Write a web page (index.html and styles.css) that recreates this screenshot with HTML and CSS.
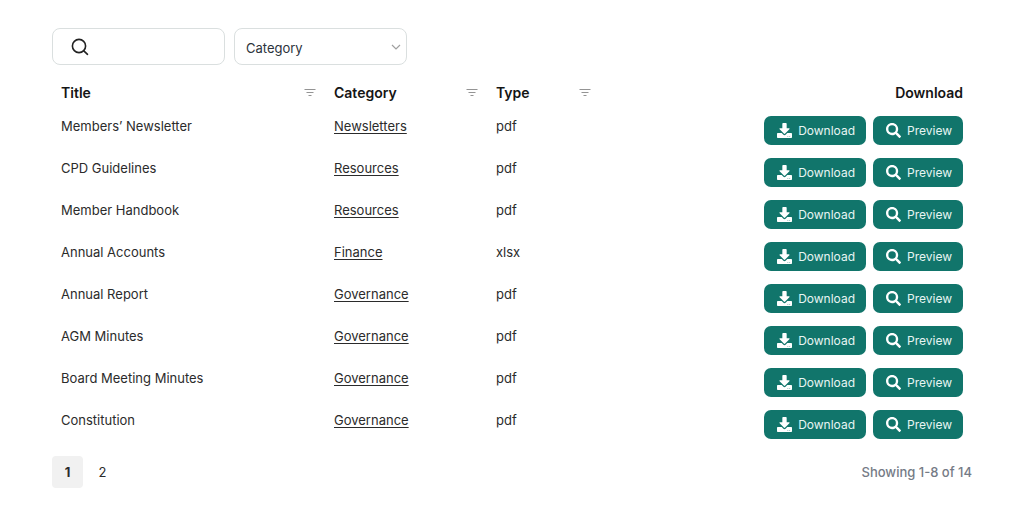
FILE: index.html
```
<!DOCTYPE html>
<html lang="en">
<head>
<meta charset="utf-8">
<meta name="viewport" content="width=device-width, initial-scale=1">
<title>Documents</title>
<link rel="stylesheet" href="styles.css">
</head>
<body>
<svg class="sprite" aria-hidden="true">
  <symbol id="filter" viewBox="0 0 12 10"><path d="M.5 1.5h11M2.5 4.5h7M4.5 7.5h3" fill="none" stroke="currentColor" stroke-width="1.2"/></symbol>
  <symbol id="download" viewBox="0 0 512 512"><path fill="currentColor" d="M206 0h100c13 0 24 11 24 24v158h78c18 0 27 21 14 34L270 368c-7 7-20 7-27 0L91 216c-13-13-4-34 14-34h77V24c0-13 11-24 24-24zm306 366v122c0 13-11 24-24 24H24c-13 0-24-11-24-24V366c0-13 11-24 24-24h137l59 59c20 20 52 20 72 0l59-59h137c13 0 24 11 24 24zM388 464a16 16 0 1 0-32 0 16 16 0 0 0 32 0zm64 0a16 16 0 1 0-32 0 16 16 0 0 0 32 0z"/></symbol>
  <symbol id="lens" viewBox="0 0 512 512"><path fill="currentColor" d="M505 443L405 343c-4-5-11-7-17-7h-16c28-35 44-80 44-128C416 93 323 0 208 0S0 93 0 208s93 208 208 208c48 0 93-16 128-44v16c0 6 2 13 7 17l100 100c9 9 24 9 34 0l28-28c9-10 9-25 0-34zM208 336a128 128 0 1 1 0-256 128 128 0 0 1 0 256z"/></symbol>
</svg>
<main class="documents">
  <form class="filters">
    <label class="search">
      <svg class="search-icon" viewBox="0 0 18 18" aria-hidden="true"><circle cx="8" cy="8" r="6.6"/><path d="M12.8 12.8l3.7 3.5"/></svg>
      <input class="search-input" type="search" aria-label="Search documents">
    </label>
    <div class="select">
      <select class="select-input" aria-label="Category"><option>Category</option></select>
      <svg class="chevron" viewBox="0 0 10 6" aria-hidden="true"><path d="M1 1l4 4 4-4"/></svg>
    </div>
  </form>
  <table class="table">
    <colgroup><col class="col-title"><col class="col-category"><col class="col-type"><col></colgroup>
    <thead>
      <tr>
        <th scope="col"><div class="heading">Title<button class="sort" type="button" aria-label="Filter title"><svg class="sort-icon"><use href="#filter"/></svg></button></div></th>
        <th scope="col"><div class="heading">Category<button class="sort" type="button" aria-label="Filter category"><svg class="sort-icon"><use href="#filter"/></svg></button></div></th>
        <th scope="col"><div class="heading">Type<button class="sort" type="button" aria-label="Filter type"><svg class="sort-icon"><use href="#filter"/></svg></button></div></th>
        <th scope="col" class="end">Download</th>
      </tr>
    </thead>
    <tbody>
      <tr><td>Members’ Newsletter</td><td><a class="link" href="#">Newsletters</a></td><td>pdf</td><td><div class="actions"><button class="button" type="button"><svg class="icon"><use href="#download"/></svg>Download</button><button class="button" type="button"><svg class="icon"><use href="#lens"/></svg>Preview</button></div></td></tr>
      <tr><td>CPD Guidelines</td><td><a class="link" href="#">Resources</a></td><td>pdf</td><td><div class="actions"><button class="button" type="button"><svg class="icon"><use href="#download"/></svg>Download</button><button class="button" type="button"><svg class="icon"><use href="#lens"/></svg>Preview</button></div></td></tr>
      <tr><td>Member Handbook</td><td><a class="link" href="#">Resources</a></td><td>pdf</td><td><div class="actions"><button class="button" type="button"><svg class="icon"><use href="#download"/></svg>Download</button><button class="button" type="button"><svg class="icon"><use href="#lens"/></svg>Preview</button></div></td></tr>
      <tr><td>Annual Accounts</td><td><a class="link" href="#">Finance</a></td><td>xlsx</td><td><div class="actions"><button class="button" type="button"><svg class="icon"><use href="#download"/></svg>Download</button><button class="button" type="button"><svg class="icon"><use href="#lens"/></svg>Preview</button></div></td></tr>
      <tr><td>Annual Report</td><td><a class="link" href="#">Governance</a></td><td>pdf</td><td><div class="actions"><button class="button" type="button"><svg class="icon"><use href="#download"/></svg>Download</button><button class="button" type="button"><svg class="icon"><use href="#lens"/></svg>Preview</button></div></td></tr>
      <tr><td>AGM Minutes</td><td><a class="link" href="#">Governance</a></td><td>pdf</td><td><div class="actions"><button class="button" type="button"><svg class="icon"><use href="#download"/></svg>Download</button><button class="button" type="button"><svg class="icon"><use href="#lens"/></svg>Preview</button></div></td></tr>
      <tr><td>Board Meeting Minutes</td><td><a class="link" href="#">Governance</a></td><td>pdf</td><td><div class="actions"><button class="button" type="button"><svg class="icon"><use href="#download"/></svg>Download</button><button class="button" type="button"><svg class="icon"><use href="#lens"/></svg>Preview</button></div></td></tr>
      <tr><td>Constitution</td><td><a class="link" href="#">Governance</a></td><td>pdf</td><td><div class="actions"><button class="button" type="button"><svg class="icon"><use href="#download"/></svg>Download</button><button class="button" type="button"><svg class="icon"><use href="#lens"/></svg>Preview</button></div></td></tr>
    </tbody>
  </table>
  <footer class="footer">
    <nav class="pages" aria-label="Pages">
      <button class="page current" type="button" aria-current="page">1</button>
      <button class="page" type="button">2</button>
    </nav>
    <div class="summary">Showing 1-8 of 14</div>
  </footer>
</main>
</body>
</html>
```

FILE: styles.css
```
* { box-sizing: border-box; }
body {
  margin: 0;
  background: #fff;
  color: #2b2b2b;
  font: 13px/20px Inter, "Liberation Sans", sans-serif;
}
button, input, select { font: inherit; color: inherit; }
button { cursor: pointer; }
.sprite { display: none; }
.documents { padding: 28px 52px; }
.filters { display: flex; gap: 9px; margin-bottom: 10px; }
.search, .select {
  display: flex;
  align-items: center;
  width: 173px;
  height: 37px;
  border: 1px solid #dadfdf;
  border-radius: 8px;
}
.search { gap: 8px; padding: 0 12px 0 18px; }
.search-icon {
  flex: none;
  width: 18px;
  height: 18px;
  fill: none;
  stroke: #222;
  stroke-width: 1.6;
  stroke-linecap: round;
}
.search-input {
  min-width: 0;
  width: 100%;
  border: 0;
  outline: 0;
  background: none;
}
.select { display: grid; }
.select-input, .chevron { grid-area: 1 / 1; }
.select-input {
  width: 100%;
  height: 100%;
  padding: 2px 28px 0 11px;
  appearance: none;
  border: 0;
  border-radius: 8px;
  background: none;
  color: #2c333b;
}
.chevron {
  justify-self: end;
  width: 10px;
  height: 6px;
  margin-right: 5px;
  fill: none;
  stroke: #a0a0a0;
  stroke-width: 1.2;
  pointer-events: none;
}
.table { width: 100%; border-collapse: collapse; table-layout: fixed; }
.col-title { width: 273px; }
.col-category { width: 162px; }
.col-type { width: 113px; }
th {
  padding: 8px 9px 6px;
  color: #151515;
  font-size: 14px;
  font-weight: 600;
  text-align: left;
}
.end { text-align: right; }
.heading { display: flex; align-items: center; justify-content: space-between; }
.sort { display: flex; padding: 0; border: 0; background: none; color: #949494; }
.sort-icon { width: 12px; height: 10px; }
td { padding: 7px 9px 6px; vertical-align: top; }
.link { color: inherit; text-underline-offset: 2px; }
.actions { display: flex; justify-content: flex-end; gap: 7px; }
.button {
  display: flex;
  align-items: center;
  gap: 6px;
  height: 29px;
  padding: 0 11px 0 13px;
  border: 0;
  border-radius: 7px;
  background: #11756b;
  color: #e8f5f3;
  font-size: 12px;
}
.icon { width: 15px; height: 15px; color: #fff; }
.footer {
  display: flex;
  align-items: center;
  justify-content: space-between;
  margin-top: 11px;
}
.pages { display: flex; gap: 4px; }
.page {
  width: 31px;
  height: 32px;
  padding: 0;
  border: 0;
  border-radius: 4px;
  background: none;
}
.current { background: #f1f1f1; font-weight: 700; }
.summary { color: #757b86; font-weight: 500; }
```
